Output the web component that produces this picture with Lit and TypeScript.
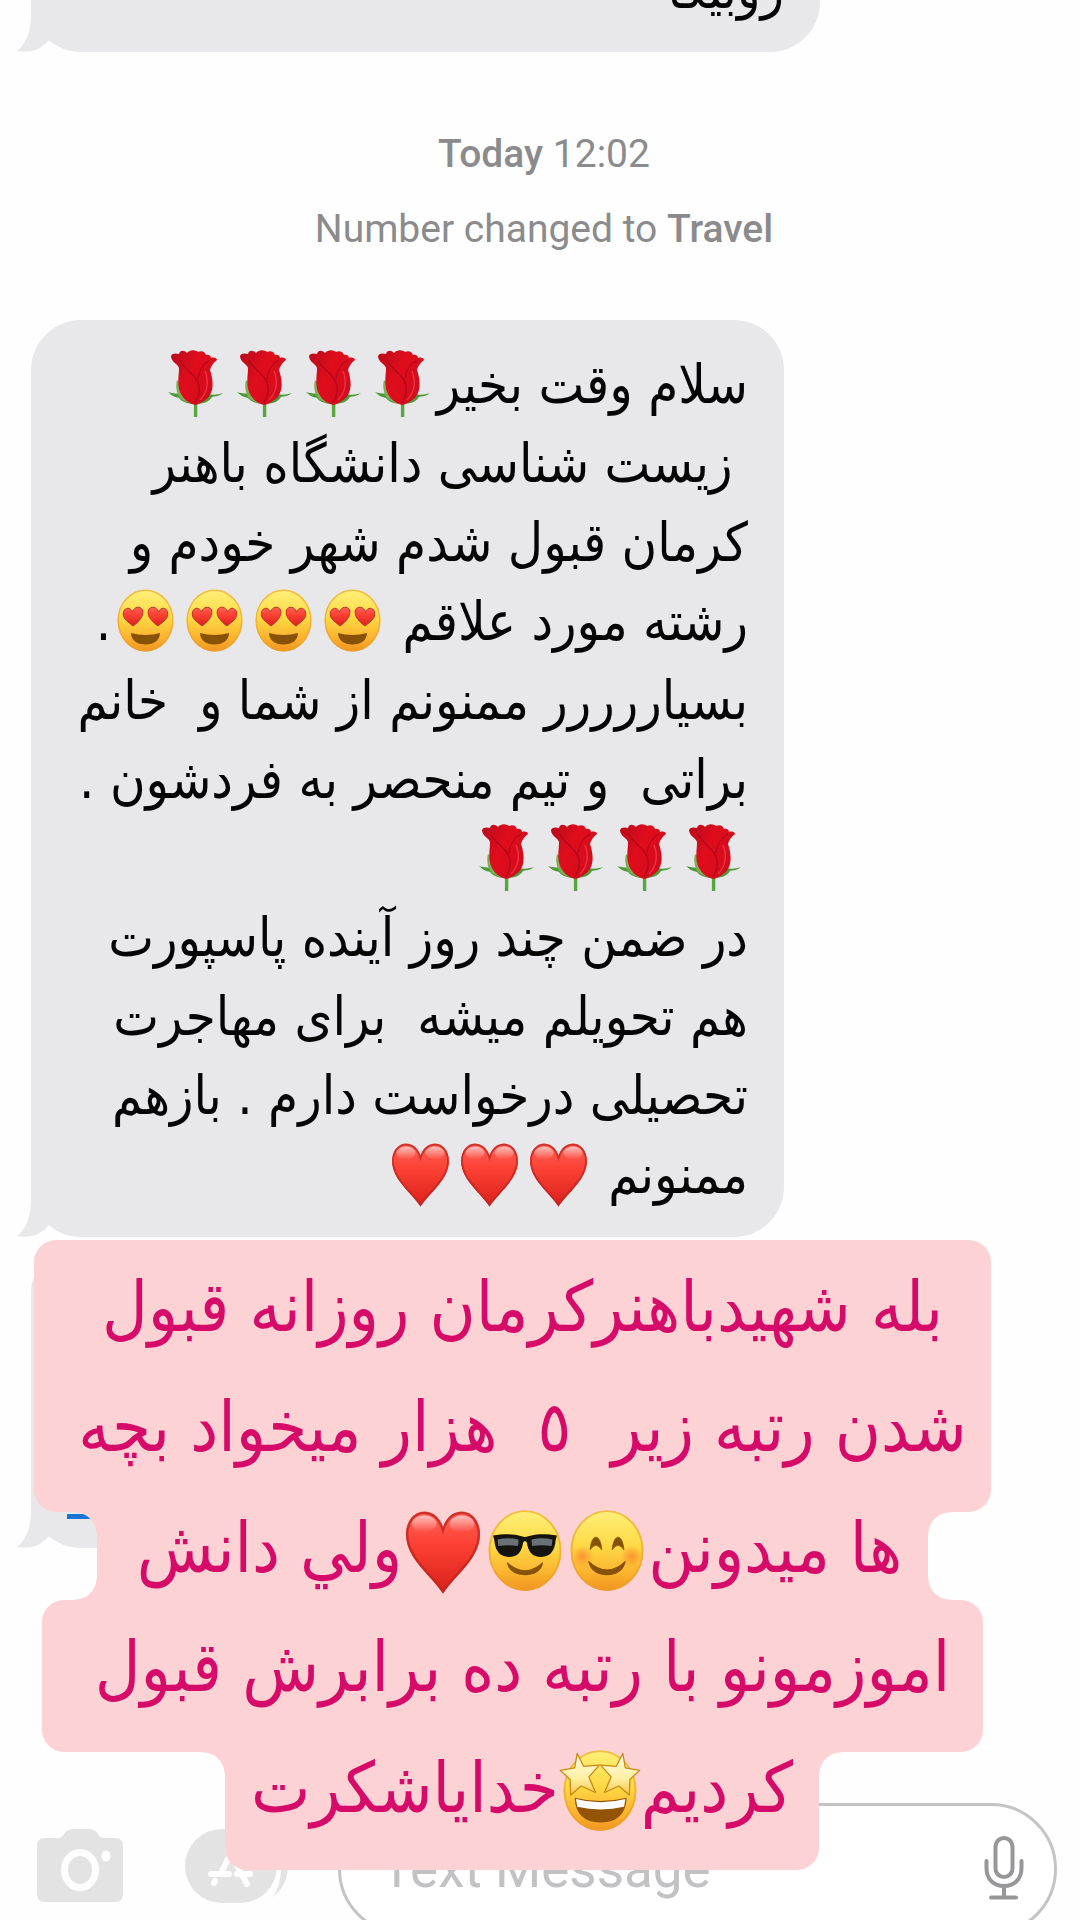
import { LitElement, html, svg, css, nothing } from "lit";
import { customElement, property } from "lit/decorators.js";

type Emoji = "rose" | "love" | "heart" | "cool" | "smile" | "star";
type Part = string | { emoji: Emoji; count: number };

const labels: Record<Emoji, string> = {
  rose: "🌹",
  love: "😍",
  heart: "❤️",
  cool: "😎",
  smile: "😊",
  star: "🤩",
};

const face = svg`
  <ellipse cx="34.5" cy="33.5" rx="28" ry="31" fill="url(#skin)"/>
  <ellipse cx="34.5" cy="33.5" rx="27.3" ry="30.3" fill="none" stroke="#e9a02c" stroke-opacity=".65" stroke-width="1.4"/>`;

const shapes = {
  rose: svg`
    <path d="M32.900 51h3.400v16h-3.400z" fill="#58a63c"/>
    <path d="M7 42c5 1.500 10 2 14 1 5 2 10 6 13 11 3-6 7-9 13-10 5 1 9 1 15-1-5 4-8 3-11 4-3 5-9 7-16 7-8 0-14-2-17-6-4-1-7-2-11-6z" fill="#4c9a3a"/>
    <path d="M16 30c-2 7 0 16 5 20l10 4-7-18z" fill="#7cae54"/>
    <path d="M10 6c1-3 5-3 8-2 1-4 5-4 8-1 3-4 9-3 11-1 4-2 7 0 8 3 3-1 5 1 5 3 3-1 6 0 6 2-4 3-6 6-7 10 3 9 4 18 0 25-3 5-9 8-14 10-7-1-13-6-16-13-3-9-1-17-1-24-1-4-8-6-8-12z" fill="url(#petal)"/>
    <path d="M19 10c4 10 17 14 19 26 1 7-1 12-4 17M37 29c1-9 6-16 12-19" fill="none" stroke="#8d0016" stroke-width="1.300" stroke-opacity=".5"/>
    <path d="M44 21c4 10 3 21-5 29" fill="none" stroke="#ff5861" stroke-width="1.500" stroke-opacity=".5"/>`,
  love: svg`${face}
    <path d="M22 39C16 34 11 31 12.500 25c1.500-5 7-5 9 0 2-6 8-6 10-2 2 6-4 12-9.500 16z" fill="url(#red)" stroke="#bd3424" stroke-width="1"/>
    <path d="M47 39c6-5 11-8 9.500-14-1.500-5-7-5-9 0-2-6-8-6-10-2-2 6 4 12 9.500 16z" fill="url(#red)" stroke="#bd3424" stroke-width="1"/>
    <path d="M20 46c9 2.500 20 2.500 29 0 0 7-6 11.500-14.500 11.500S20 53 20 46z" fill="#875205"/>`,
  heart: svg`
    <path d="M34.500 66.500C26 53 6 40 6 21 6 11 12 3.500 20 3.500c7 0 12 5 14.500 12C37 8.500 42 3.500 49 3.500c8 0 14 7.500 14 17.500 0 19-20 32-28.500 45.500z" fill="url(#red)"/>
    <path d="M34.500 65C26 52 7 39 7 21 7 12 12.500 4.600 20 4.600c7 0 12 5 14.500 13.500C37 9.600 42 4.600 49 4.600c7.500 0 13 7.400 13 16.400C62 39 43 52 34.500 65z" fill="none" stroke="#c02522" stroke-width="1.800" stroke-opacity=".8"/>
    <ellipse cx="20" cy="13" rx="9.500" ry="6.500" fill="url(#gloss)"/><ellipse cx="49" cy="13" rx="9.500" ry="6.500" fill="url(#gloss)"/>`,
  cool: svg`${face}
    <path d="M10 22c8-1.500 16-1.500 22 .5q2.500 1 5 0c6-2 14-2 22-.5l-1 4q-1 12-11 12.500c-7 0-10-4-11-11q-1.500-2.500-3 0c-1 7-4 11-11 11Q12 38 11 26z" fill="#15140f"/>
    <path d="M13.500 25q8-2 16 0 0 4-.5 5-7-1-15 0-.5-3-.5-5zM39.500 25q8-2 16 0 0 2-.500 5-8-1-15 0-.5-3-.5-5z" fill="#697078"/>
    <path d="M21 43Q34.500 55 48 43Q46 52 34.500 52Q23 52 21 43z" fill="#87520a" stroke="#87520a" stroke-width=".8" stroke-linejoin="round"/>`,
  smile: svg`${face}
    <circle cx="15.500" cy="38" r="8.500" fill="url(#blush)"/><circle cx="53.500" cy="38" r="8.500" fill="url(#blush)"/>
    <path d="M21.500 33c1-13 8-13 9 0q-4.500-7-9 0zM38.500 33c1-13 8-13 9 0q-4.500-7-9 0z" fill="#875205" stroke="#875205" stroke-width=".6" stroke-linejoin="round"/>
    <path d="M20.500 42Q34.500 55 48.500 42Q46 52 34.500 52Q23 52 20.500 42z" fill="#87520a" stroke="#87520a" stroke-width=".8" stroke-linejoin="round"/>`,
  star: svg`${face}
    <path d="M15 39q19.500 5 40 0-1 19-20 19T15 39z" fill="#935407"/>
    <path d="M16 40q19 5 38 0l-1 6q-18 4-36 0z" fill="#fff"/>
    <path d="M17 5l5 10 12-1-8 9 5 12-11-5-8 7-.500-12L4 18l11-2z" fill="url(#gold)" stroke="#c98a16" stroke-width="1" stroke-linejoin="round"/>
    <path d="M52 5l-5 10-12-1 8 9-5 12 11-5 8 7 .500-12L65 18l-11-2z" fill="url(#gold)" stroke="#c98a16" stroke-width="1" stroke-linejoin="round"/>`,
};

const defs = svg`<defs>
  <linearGradient id="skin" x1="0" y1="0" x2="0" y2="1"><stop offset="0" stop-color="#fff07a"/><stop offset=".45" stop-color="#fed944"/><stop offset=".8" stop-color="#fbb02c"/><stop offset="1" stop-color="#ee9420"/></linearGradient>
  <linearGradient id="petal" x1="0" y1="0" x2="1" y2=".6"><stop offset="0" stop-color="#b80a1c"/><stop offset=".5" stop-color="#e00d1c"/><stop offset="1" stop-color="#d20b1c"/></linearGradient>
  <linearGradient id="red" x1="0" y1="0" x2="0" y2="1"><stop offset="0" stop-color="#ff6257"/><stop offset=".4" stop-color="#fc4134"/><stop offset="1" stop-color="#d91f1b"/></linearGradient>
  <linearGradient id="gloss" x1="0" y1="0" x2="0" y2="1"><stop offset="0" stop-color="#fff" stop-opacity=".6"/><stop offset="1" stop-color="#fff" stop-opacity="0"/></linearGradient>
  <linearGradient id="gold" x1="0" y1="0" x2="0" y2="1"><stop offset="0" stop-color="#fffbe0"/><stop offset=".6" stop-color="#fff0a4"/><stop offset="1" stop-color="#f6c64a"/></linearGradient>
  <radialGradient id="blush"><stop offset="0" stop-color="#fb7d2c" stop-opacity=".7"/><stop offset="1" stop-color="#fb7d2c" stop-opacity="0"/></radialGradient>
</defs>`;

@customElement("emoji-glyph")
export class EmojiGlyph extends LitElement {
  @property() name: Emoji = "heart";
  @property({ type: Boolean, reflect: true }) large = false;
  static styles = css`
    :host { display: inline-block; width: 69px; height: 67px; vertical-align: -14px; line-height: 0; }
    :host([large]) { width: 82px; height: 87px; vertical-align: -24px; }
    .art { display: block; width: 100%; height: 100%; overflow: visible; }
  `;
  render() {
    return html`<svg class="art" role="img" aria-label=${labels[this.name]}
      viewBox=${this.large ? "3 2 63 66" : "0 0 69 67"}>${defs}${shapes[this.name]}</svg>`;
  }
}

const renderParts = (parts: Part[], large = false) =>
  parts.map((part) =>
    typeof part === "string"
      ? part
      : Array.from({ length: part.count }, () => html`<emoji-glyph name=${part.emoji} ?large=${large}></emoji-glyph>`),
  );

@customElement("message-bubble")
export class MessageBubble extends LitElement {
  @property({ attribute: false }) lines: Part[][] = [];
  @property({ type: Boolean }) link = false;
  static styles = css`
    :host { display: block; position: relative; box-sizing: border-box; padding: 25px 36px 23px; border-radius: 50px; background: #e8e8ea; color: #050505; }
    .line { margin: 0; height: 79px; direction: rtl; white-space: pre; font: 54px/79px "DejaVu Sans Condensed", "DejaVu Sans", sans-serif; }
    .tail { position: absolute; left: -14px; bottom: 0; width: 72px; height: 52px; }
    .rule { position: relative; height: 5px; margin-top: 246px; background: #1b73d2; }
  `;
  render() {
    return html`
      <svg class="tail" viewBox="0 0 72 52" aria-hidden="true">
        <path d="M14 0v14C14 32 9 44 0 51q20 4 33-12 14 13 37 13h2V0z" fill="#e8e8ea"/>
      </svg>
      ${this.lines.map((l) => html`<p class="line">${renderParts(l)}</p>`)}
      ${this.link ? html`<div class="rule"></div>` : nothing}
    `;
  }
}

@customElement("story-caption")
export class StoryCaption extends LitElement {
  static styles = css`
    :host { display: block; color: #d60b69; font: 70px/120px "DejaVu Sans Condensed", "DejaVu Sans", sans-serif; --fill: #fdd2d4; }
    .block { position: relative; box-sizing: border-box; background: var(--fill); border-radius: 22px; padding: 7px 0 0 20px; }
    .line { margin: 0 -40px; height: 120px; direction: rtl; text-align: center; white-space: pre; }
    .first { height: 272px; }
    .second { height: 88px; margin: 0 63px; border-radius: 0; padding: 0 0 0 14px; }
    .third { height: 152px; margin: 0 8px; }
    .last { height: 118px; margin: 0 172px 0 191px; border-radius: 0 0 22px 22px; padding: 0; }
    .flare { display: flow-root; }
    .flare .line { margin-top: -24px; }
    .flare::before, .flare::after { content: ""; position: absolute; top: 0; bottom: 0; width: 22px; }
    .flare::before { right: 100%; background:
      radial-gradient(circle at 0 100%, transparent 21px, var(--fill) 22px) top / 22px 22px no-repeat; }
    .flare::after { left: 100%; background:
      radial-gradient(circle at 100% 100%, transparent 21px, var(--fill) 22px) top / 22px 22px no-repeat; }
    .second::before { background:
      radial-gradient(circle at 0 100%, transparent 21px, var(--fill) 22px) top / 22px 22px no-repeat,
      radial-gradient(circle at 0 0, transparent 21px, var(--fill) 22px) bottom / 22px 22px no-repeat; }
    .second::after { background:
      radial-gradient(circle at 100% 100%, transparent 21px, var(--fill) 22px) top / 22px 22px no-repeat,
      radial-gradient(circle at 100% 0, transparent 21px, var(--fill) 22px) bottom / 22px 22px no-repeat; }
  `;
  render() {
    return html`
      <div class="block first">
        <p class="line">بله شهیدباهنرکرمان روزانه قبول</p>
        <p class="line">شدن رتبه زیر  ٥  هزار میخواد بچه</p>
      </div>
      <div class="block second flare">
        <p class="line">${renderParts(["ها میدونن", { emoji: "smile", count: 1 }, { emoji: "cool", count: 1 }, { emoji: "heart", count: 1 }, "ولي دانش"], true)}</p>
      </div>
      <div class="block third"><p class="line">اموزمونو با رتبه ده برابرش قبول</p></div>
      <div class="block last flare">
        <p class="line">${renderParts(["کردیم", { emoji: "star", count: 1 }, "خدایاشکرت"], true)}</p>
      </div>
    `;
  }
}

const roses: Part = { emoji: "rose", count: 4 };
const message: Part[][] = [
  ["سلام وقت بخیر", roses],
  [" زیست شناسی دانشگاه باهنر"],
  ["کرمان قبول شدم شهر خودم و"],
  ["رشته مورد علاقم ", { emoji: "love", count: 4 }, "."],
  ["بسیاررررر ممنونم از شما و  خانم"],
  ["براتی  و تیم منحصر به فردشون ."],
  [roses],
  ["در ضمن چند روز آینده پاسپورت"],
  ["هم تحویلم میشه  برای مهاجرت"],
  ["تحصیلی درخواست دارم . بازهم"],
  ["ممنونم ", { emoji: "heart", count: 3 }],
];

@customElement("app-root")
export class AppRoot extends LitElement {
  static styles = css`
    :host { display: block; font-family: Roboto, "Liberation Sans", sans-serif; }
    .screen { position: relative; display: flex; flex-direction: column; height: 100vh; overflow: hidden; background: #fefefe; }
    .thread { flex: 1; min-height: 0; overflow: hidden; display: flex; flex-direction: column; justify-content: flex-end; padding: 0 23px 255px 31px; }
    .thread > * { flex: none; }
    .top { margin-right: 237px; }
    .main { margin-right: 273px; }
    .notice { margin: 65px 0 53px; text-align: center; font-size: 39px; line-height: 75px; color: #8b8b8d; }
    .notice p { margin: 0; }
    .notice b { font-weight: 500; }
    .linked { margin: 6px 273px 0 0; height: 305px; }
    .composer { flex: none; display: flex; height: 117px; }
    .actions { display: flex; gap: 62px; padding: 26px 0 0 37px; }
    .icon { display: block; flex: none; border: 0; padding: 0; background: none; height: 74px; }
    .field { flex: 1; min-width: 0; display: flex; height: 132px; box-sizing: border-box; margin: 0 23px 0 49px; border: 3px solid #c4c4c6; border-radius: 66px; background: #fff; }
    .text { flex: 1; min-width: 0; border: 0; outline: 0; background: none; padding: 0 0 0 40px; font: 53px/60px Roboto, "Liberation Sans", sans-serif; }
    .text::placeholder { color: #c2c2c5; opacity: 1; }
    .mic { margin: 26px 30px 0 0; }
    .caption { position: absolute; top: 1240px; left: 34px; right: 89px; }
  `;
  render() {
    return html`
      <main class="screen">
        <section class="thread">
          <message-bubble class="top" .lines=${[["روبیکا"]]}></message-bubble>
          <div class="notice">
            <p><b>Today</b> 12:02</p>
            <p>Number changed to <b>Travel</b></p>
          </div>
          <message-bubble class="main" .lines=${message}></message-bubble>
          <message-bubble class="linked" link></message-bubble>
        </section>
        <form class="composer">
          <div class="actions">
            <button class="icon" type="button" aria-label="Camera">
              <svg width="86" height="74" viewBox="0 0 86 74"><path d="M8 9h14c5 0 5-9 13-9h18c8 0 8 9 13 9h12q8 0 8 8v48q0 8-8 8H8q-8 0-8-8V17q0-8 8-8z" fill="#e3e3e3"/><ellipse cx="43" cy="41" rx="15.500" ry="17.500" fill="none" stroke="#fefefe" stroke-width="7"/><ellipse cx="69" cy="27" rx="4.500" ry="5.500" fill="#fefefe"/></svg>
            </button>
            <button class="icon" type="button" aria-label="Apps">
              <svg width="104" height="74" viewBox="0 0 104 74"><path d="M36 0h28c22 0 39 16 39 37 0 16-8 27-20 34 8-10 13-20 13-34S80 0 60 0z" fill="#e3e3e3"/><rect width="92" height="74" rx="37" fill="#e3e3e3"/><path d="M51 14L37 42M26 45h18M52 45h13M43 20l19 35M30 52l-1 2" stroke="#fefefe" stroke-width="6" stroke-linecap="round"/><path d="M94 36c0 17-3 27-12 35" fill="none" stroke="#fefefe" stroke-width="4"/></svg>
            </button>
          </div>
          <div class="field">
            <input class="text" type="text" placeholder="Text Message" aria-label="Text Message" />
            <button class="icon mic" type="button" aria-label="Dictate">
              <svg width="40" height="64" viewBox="0 0 40 64" fill="none" stroke="#979799" stroke-width="4" stroke-linecap="round"><rect x="11.500" y="2" width="17" height="39" rx="8.500"/><path d="M2.500 25v7c0 12 8 18 17.500 18s17.500-6 17.500-18v-7M20 50v11M7 61.500h25"/></svg>
            </button>
          </div>
        </form>
        <story-caption class="caption"></story-caption>
      </main>
    `;
  }
}
